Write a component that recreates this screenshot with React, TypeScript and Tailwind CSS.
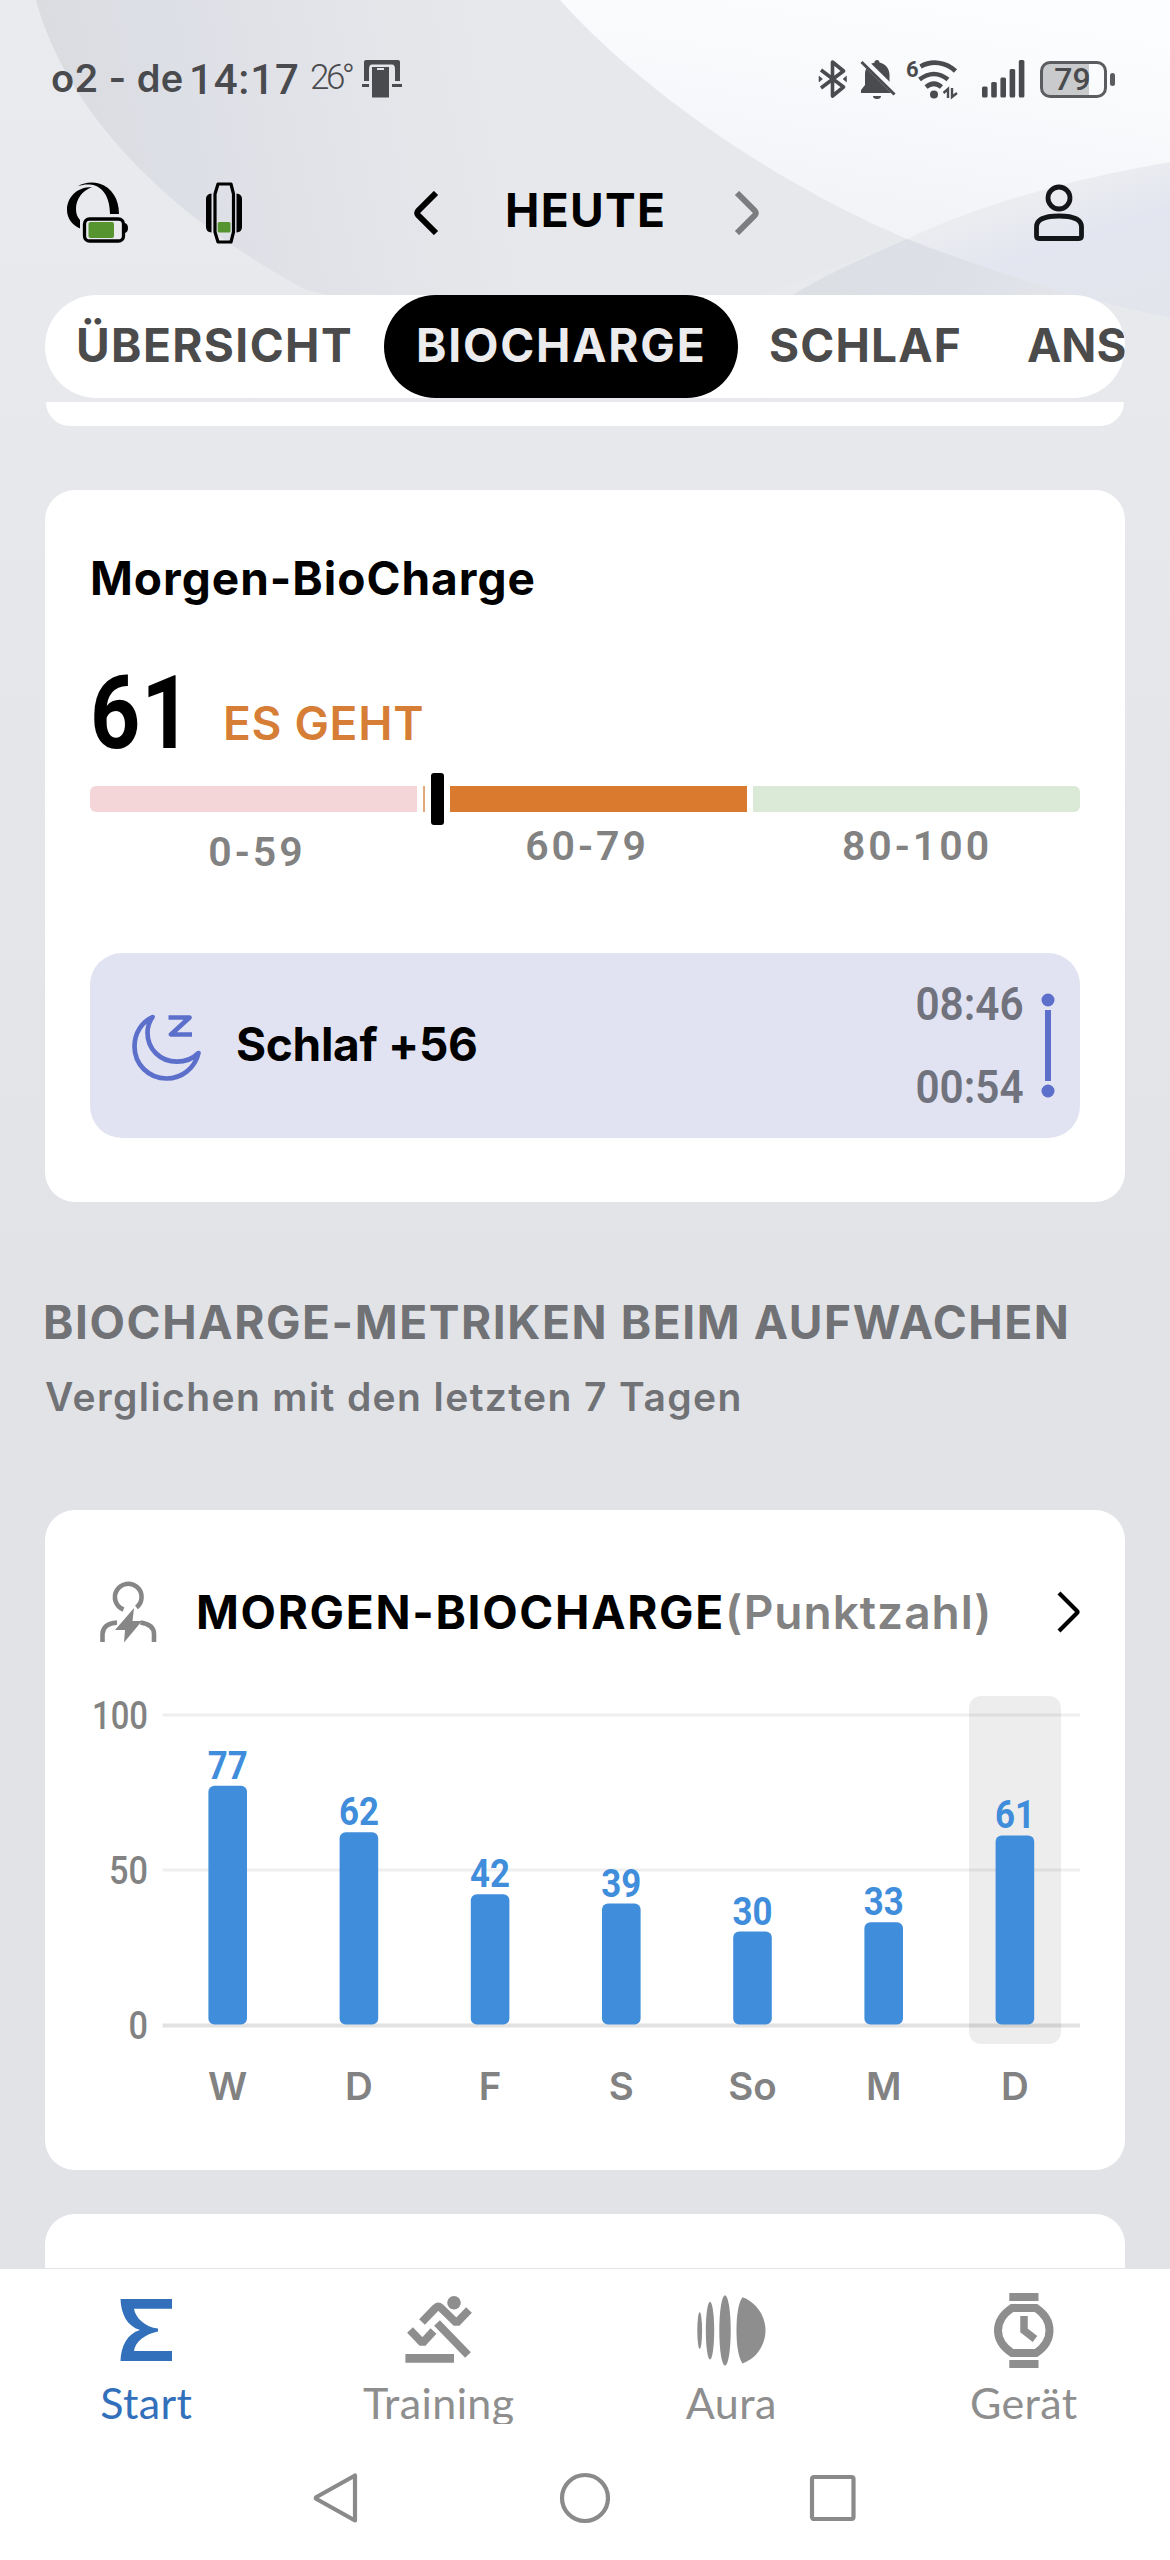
import type { ReactNode } from 'react'

const days = [
  { label: 'W', value: 77 },
  { label: 'D', value: 62 },
  { label: 'F', value: 42 },
  { label: 'S', value: 39 },
  { label: 'So', value: 30 },
  { label: 'M', value: 33 },
  { label: 'D', value: 61 },
]

const Backdrop = () => (
  <svg className="absolute inset-0" width="1170" height="2560" viewBox="0 0 1170 2560" fill="none">
    <defs>
      <linearGradient id="base" x1="0" y1="0" x2="0" y2="2560" gradientUnits="userSpaceOnUse">
        <stop stopColor="#e9ebee" />
        <stop offset=".2" stopColor="#e6e8eb" />
        <stop offset=".5" stopColor="#e2e3e7" />
        <stop offset="1" stopColor="#e2e3e7" />
      </linearGradient>
      <linearGradient id="leaf" x1="60" y1="120" x2="480" y2="40" gradientUnits="userSpaceOnUse">
        <stop stopColor="#dadce0" />
        <stop offset=".25" stopColor="#dddfe6" />
        <stop offset="1" stopColor="#e7e8eb" />
      </linearGradient>
      <linearGradient id="light" x1="900" y1="0" x2="850" y2="330" gradientUnits="userSpaceOnUse">
        <stop stopColor="#fcfdfe" />
        <stop offset=".45" stopColor="#f6f7fa" />
        <stop offset="1" stopColor="#eceef2" />
      </linearGradient>
      <linearGradient id="wing" x1="1060" y1="190" x2="1100" y2="310" gradientUnits="userSpaceOnUse">
        <stop stopColor="#ebecf0" />
        <stop offset=".4" stopColor="#e3e6f0" />
        <stop offset="1" stopColor="#e2e5ec" />
      </linearGradient>
      <linearGradient id="overlap" x1="850" y1="250" x2="1060" y2="330" gradientUnits="userSpaceOnUse">
        <stop stopColor="#dcdfe4" />
        <stop offset=".5" stopColor="#dde0e7" />
        <stop offset="1" stopColor="#e3e5ea" />
      </linearGradient>
    </defs>
    <rect width="1170" height="2560" fill="url(#base)" />
    <path d="M36 0C60 90 140 200 306 290L440 320H700L907 239C790 190 650 100 560 0Z" fill="url(#leaf)" />
    <path d="M560 0C650 100 790 190 907 239C990 271 1080 300 1170 318V0Z" fill="url(#light)" />
    <path d="M907 239C990 200 1080 178 1170 162V318C1080 300 990 271 907 239Z" fill="url(#wing)" />
    <path d="M907 239C860 259 815 280 785 300H1092C1030 283 970 263 907 239Z" fill="url(#overlap)" />
  </svg>
)

const StatusBar = () => (
  <div className="relative flex h-[158px] shrink-0 items-center pl-[51px] pr-[55px] text-[#4a4b4e]">
    <div className="w-[138px] pb-[1px] font-['Inter',sans-serif] text-[38px] font-semibold tracking-[0.4px] whitespace-nowrap">o2 - de</div>
    <div className="w-[121px] font-['Roboto',sans-serif] text-[42px] font-medium tracking-[0.8px]">14:17</div>
    <div className="w-[51px] pb-[2px] font-['Roboto',sans-serif] text-[35px] font-light tracking-[-3.5px]">26°</div>
    <svg width="42" height="40" viewBox="0 0 42 40" fill="currentColor">
      <path d="M5 1H37Q39 1 39 3V22H34V10Q34 5.500 31 5.500H11Q8 5.500 8 10V22H3V3Q3 1 5 1Z" />
      <path d="M11 8H28V38.500H11Z" />
      <path d="M1 25H8V28H1ZM31 25H41V28H31Z" />
      <path d="M16 10H23" stroke="#e3e5ea" strokeWidth="2" />
    </svg>
    <div className="ml-auto flex items-center">
      <svg width="30" height="38" viewBox="0 0 30 38" fill="none" stroke="currentColor" strokeWidth="3.600" strokeLinejoin="round">
        <path d="M3 10L25.500 27L14.500 36V2L25.500 11L3 28" />
        <path d="M1 16L4.500 19L1 22ZM28.500 16L25 19L28.500 22Z" strokeWidth="0.500" fill="currentColor" />
      </svg>
      <svg className="ml-[12px]" width="36" height="40" viewBox="0 0 36 40">
        <path
          d="M17 1C18.500 1 19.500 2 19.500 3.500C26 5 29.500 10 29.500 16V26L33 34H1V31L5 26V15C5 9 9 5 14.500 3.500C14.500 2 15.500 1 17 1Z"
          fill="currentColor"
        />
        <path d="M13 37H21A4 3 0 0 1 13 37Z" fill="currentColor" />
        <path d="M3 1.500L36 34" stroke="#f7f8fa" strokeWidth="7" />
        <path d="M1.500 3L34.500 35.500" stroke="currentColor" strokeWidth="3" />
      </svg>
      <svg className="ml-[8px] overflow-visible" width="56" height="42" viewBox="-2 0 56 42" fill="none" stroke="currentColor" strokeWidth="4.600">
        <text x="0" y="18.500" fill="currentColor" stroke="none" className="font-['Roboto',sans-serif] text-[22px] font-bold">6</text>
        <path d="M14.500 8.500C26 2 40 4 49.500 13" />
        <path d="M13.500 21.500Q28 10.500 42 21.500" />
        <path d="M20 29Q28 22.500 35.500 29" />
        <circle cx="28" cy="36.500" r="4" fill="currentColor" stroke="none" />
        <path d="M37.500 35L42 31V40M46 30V39L51 35" strokeWidth="2.400" />
      </svg>
      <svg className="ml-[22px]" width="43" height="38" viewBox="0 0 43 38" fill="currentColor">
        <rect x="0" y="26.500" width="5.600" height="11" rx="1.500" />
        <rect x="9.200" y="22" width="5.600" height="15.500" rx="1.500" />
        <rect x="18.400" y="17.500" width="5.600" height="20" rx="1.500" />
        <rect x="27.600" y="9" width="5.600" height="28.500" rx="1.500" />
        <rect x="36.800" y="0" width="5.600" height="37.500" rx="1.500" />
      </svg>
      <div className="ml-[15px] flex h-[37px] w-[67px] items-center justify-center rounded-[10px] border-3 border-[#5b5c5f] bg-linear-to-r from-[#c9cacc] from-76% to-transparent to-76% pr-[2px] font-['Roboto',sans-serif] text-[32px] font-medium">
        79
      </div>
      <div className="ml-[3px] h-[13px] w-[5px] rounded-full bg-[#5b5c5f]" />
    </div>
  </div>
)

const Header = () => (
  <div className="relative flex h-[110px] shrink-0 items-center pl-[66px] pr-[85px]">
    <svg width="64" height="64" viewBox="0 0 64 64">
      <path d="M12 5C18 1.500 26 0.500 33 2.500C46 6.500 53 18 53 33H44C44 18 38 6 26 3.800C21 3 17 3.500 12 5Z" />
      <path d="M26 6C10 6 1 17 1 29C1 37 6 44 14 47.500V39C11 36 10 32 10 28C10 18 16 10 26 6Z" />
      <rect x="18.500" y="38" width="39" height="22" rx="5" fill="none" stroke="#000" strokeWidth="3.300" />
      <rect x="22.500" y="41" width="25.500" height="16" rx="2" fill="#56942f" />
      <path d="M59 42Q62 43 62 47T59 52Z" />
    </svg>
    <svg className="ml-[75px]" width="38" height="64" viewBox="0 0 38 64">
      <path d="M13 3H26L28.500 13V51L26 61H13L10 51V13Z" fill="none" stroke="#000" strokeWidth="3.200" strokeLinejoin="round" />
      <path d="M6.500 12.500V51.500Q1 51 1 46V18Q1 13 6.500 12.500ZM31.500 12.500V51.500Q37 51 37 46V18Q37 13 31.500 12.500Z" />
      <rect x="12.700" y="41" width="12.800" height="10.500" rx="1.500" fill="#56942f" />
    </svg>
    <svg className="ml-[168px]" width="28" height="44" viewBox="0 0 28 44" fill="none" stroke="#000" strokeWidth="6">
      <path d="M25 2L7 20Q5.500 22 7 24L25 42" />
    </svg>
    <div className="ml-[66px] w-[229px] pb-[5px] font-['Inter',sans-serif] text-[46px] font-bold tracking-[1.3px]">HEUTE</div>
    <svg width="28" height="44" viewBox="0 0 28 44" fill="none" stroke="#7c7d7f" strokeWidth="6">
      <path d="M3 2L21 20Q22.500 22 21 24L3 42" />
    </svg>
    <svg className="ml-auto" width="52" height="60" viewBox="0 0 52 60" fill="none" stroke="#141518" strokeWidth="4.800">
      <ellipse cx="26" cy="15" rx="11" ry="11" />
      <path d="M3.500 53V44C3.500 36 13 33 26 33S48.500 36 48.500 44V53Q48.500 55.500 46 55.500H6Q3.500 55.500 3.500 53Z" />
    </svg>
  </div>
)

const Tabs = () => (
  <div className="relative mx-[45px] mt-[27px] flex h-[103px] shrink-0 overflow-hidden rounded-full bg-white font-['Inter',sans-serif] text-[46px] leading-[100px] font-bold whitespace-nowrap text-[#4b4b4b]">
    <div className="w-[339px] shrink-0 pl-[31px] tracking-[1.4px]">ÜBERSICHT</div>
    <div className="w-[354px] shrink-0 rounded-full bg-black pl-[32px] tracking-[1.8px] text-[#ececee]">BIOCHARGE</div>
    <div className="w-[243px] shrink-0 pl-[31px] tracking-[1.2px]">SCHLAF</div>
    <div className="shrink-0 pl-[46px]">ANS</div>
  </div>
)

const MorningCard = () => (
  <div className="relative mx-[45px] mt-[64px] h-[712px] shrink-0 rounded-[30px] bg-white px-[45px] pt-[58px]">
    <h2 className="font-['Inter',sans-serif] text-[46px] leading-[60px] font-bold tracking-[1px]">Morgen-BioCharge</h2>
    <div className="flex h-[178px] items-start">
      <div className="mt-[55px] w-[133px] origin-left scale-x-86 font-['Roboto',sans-serif] text-[102px] leading-[100px] font-bold tracking-[1px]">61</div>
      <div className="mt-[85px] font-['Inter',sans-serif] text-[46px] leading-[60px] font-semibold tracking-[0.7px] text-[#d67d36]">ES GEHT</div>
    </div>
    <div className="flex h-[26px] items-center">
      <div className="h-full w-[327px] rounded-l-[6px] bg-[#f4d6d8]" />
      <div className="ml-[6px] h-full w-[2px] bg-[#e2a878]" />
      <div className="ml-[6px] h-[52px] w-[13px] shrink-0 rounded-[3px] bg-black" />
      <div className="ml-[6px] h-full w-[297px] bg-[#da7a2e]" />
      <div className="ml-[6px] h-full flex-1 rounded-r-[6px] bg-[#dbead7]" />
    </div>
    <div className="flex h-[141px] pt-[9px] text-center font-['Roboto',sans-serif] text-[41px] leading-[50px] font-semibold tracking-[3px] text-[#828282]">
      <div className="flex-1 pt-[6px] pl-[4px]">0-59</div>
      <div className="flex-1 pl-[4px]">60-79</div>
      <div className="flex-1 pl-[4px]">80-100</div>
    </div>
    <div className="flex h-[185px] items-center rounded-[32px] bg-[#e2e3f2] pl-[40px]">
      <svg className="mt-[5px]" width="72" height="70" viewBox="0 0 72 70" fill="none" stroke="#5c70cb" strokeWidth="4.700" strokeLinejoin="round">
        <path d="M22.500 4C12 9 4.500 20 4.500 33.500C4.500 51.500 19 65.500 36.500 65.500C52 65.500 65 55 68.500 40C63 45.500 55 48.700 47 48.700C30 48.700 17.500 36 17.500 19.500C17.500 14 19.500 8.500 22.500 4Z" />
        <path d="M38.500 4.500H59.500L41 21.500H62" />
      </svg>
      <div className="ml-[34px] pb-[3px] font-['Inter',sans-serif] text-[46px] leading-[60px] font-bold tracking-[-0.3px]">Schlaf +56</div>
      <div className="ml-auto origin-right scale-x-92 text-right font-['Roboto',sans-serif] text-[46px] leading-[83px] font-semibold text-[#70737d]">
        <div>08:46</div>
        <div>00:54</div>
      </div>
      <svg className="mr-[25px] ml-[17px]" width="14" height="185" viewBox="0 0 14 185" fill="#5c70cb">
        <circle cx="7" cy="47" r="6.500" />
        <rect x="4" y="57" width="6" height="71" />
        <circle cx="7" cy="138" r="6.500" />
      </svg>
    </div>
  </div>
)

const SectionHeading = () => (
  <div className="relative h-[308px] shrink-0 pt-[90px] font-['Inter',sans-serif] whitespace-nowrap text-[#707276]">
    <h2 className="ml-[43px] text-[46px] leading-[60px] font-bold tracking-[1.6px]">BIOCHARGE-METRIKEN BEIM AUFWACHEN</h2>
    <p className="mt-[20px] ml-[45px] text-[39px] leading-[50px] font-semibold tracking-[1.4px]">Verglichen mit den letzten 7 Tagen</p>
  </div>
)

const BASELINE = 377.5

const WeekChart = () => (
  <svg width="1080" height="523" viewBox="0 0 1080 523" className="font-['Roboto',sans-serif] text-[39px]">
    <path d="M117.500 68H1035M117.500 223H1035" stroke="#efefef" strokeWidth="3" />
    <path d="M117.500 378.500H1035" stroke="#e2e2e2" strokeWidth="4" />
    <g fill="#828282" textAnchor="end" className="font-medium">
      <text x="103" y="82" textLength="56" lengthAdjust="spacingAndGlyphs">100</text>
      <text x="103" y="236.500" textLength="39" lengthAdjust="spacingAndGlyphs">50</text>
      <text x="103" y="392" textLength="19.500" lengthAdjust="spacingAndGlyphs">0</text>
    </g>
    <rect x="924" y="49" width="92" height="348" rx="12" fill="#000" fillOpacity=".07" />
    {days.map(({ label, value }, i) => {
      const x = 182.7 + i * 131.2
      const height = value * 3.1
      return (
        <g key={i} textAnchor="middle">
          <rect x={x - 19.3} y={BASELINE - height} width="38.600" height={height} rx="6" fill="#408ddb" />
          <text x={x} y={BASELINE - height - 7} fill="#408ddb" className="font-bold" textLength="40" lengthAdjust="spacingAndGlyphs">
            {value}
          </text>
          <text x={x} y="453" fill="#828282" className="font-['Inter',sans-serif] text-[38.5px] font-semibold">
            {label}
          </text>
        </g>
      )
    })}
  </svg>
)

const ScoreCard = () => (
  <div className="relative mx-[45px] h-[660px] shrink-0 rounded-[30px] bg-white pt-[67px]">
    <div className="flex h-[70px] items-center pr-[42px] pl-[53px]">
      <svg width="60" height="66" viewBox="0 0 60 66" fill="none" stroke="#868686" strokeWidth="4.600">
        <path d="M25.500 30.500A13.300 13.300 0 1 1 38.500 28.500" />
        <path d="M4.500 63V55Q5 44.500 19 43.500M42.500 43.500Q56 45.500 56 55V63" />
        <path d="M36 29L17 51H27L26 63.500L44 42H34.500Z" fill="#868686" stroke="none" />
      </svg>
      <h2 className="ml-[38px] pb-[1px] font-['Inter',sans-serif] text-[46px] leading-[60px] font-bold tracking-[1.7px] whitespace-nowrap">
        MORGEN-BIOCHARGE<span className="font-semibold tracking-[1px] text-[#828282]">(Punktzahl)</span>
      </h2>
      <svg className="ml-auto" width="28" height="44" viewBox="0 0 28 44" fill="none" stroke="#000" strokeWidth="4.200">
        <path d="M4 3L22 21Q23 22 22 23L4 41" />
      </svg>
    </div>
    <WeekChart />
  </div>
)

const NavItem = ({ label, active, children }: { label: string; active?: boolean; children: ReactNode }) => (
  <div className={active ? 'flex flex-1 flex-col items-center text-[#3270bb]' : 'flex flex-1 flex-col items-center text-[#8e8e8e]'}>
    <div className="flex h-[76px] shrink-0 items-center">{children}</div>
    <div className="mt-[14px] shrink-0 text-[43px] leading-[42px] tracking-[0.4px]">{label}</div>
  </div>
)

const BottomNav = () => (
  <div className="relative h-[292px] shrink-0 border-t border-[#e3e4e6] bg-white">
    <div className="flex h-[155px] overflow-hidden pt-[23px] font-['Lato',sans-serif]">
      <NavItem label="Start" active>
        <svg width="52" height="62" viewBox="0 0 52 62" fill="currentColor">
          <path d="M0.500 0H52V9.700H14C15.500 19 25 28 38 29.500V32.500C25 35 15 43 14 52H52V62H0.500C1 47 7 35 20 31C7 27 1 15 0.500 0Z" />
        </svg>
      </NavItem>
      <NavItem label="Training">
        <svg width="70" height="70" viewBox="0 0 70 70" fill="none" stroke="currentColor" strokeWidth="8">
          <circle cx="50" cy="7.700" r="6.800" fill="currentColor" stroke="none" />
          <path d="M18 27L31.500 13Q34 10.500 37 13L52.500 28L65 15" strokeLinejoin="bevel" />
          <path d="M33 28L64 60" />
          <path d="M6 35L18.500 48L29.500 36" strokeLinejoin="bevel" />
          <path d="M1.400 63.400H50" strokeWidth="8.700" />
        </svg>
      </NavItem>
      <NavItem label="Aura">
        <svg width="70" height="73" viewBox="0 0 70 73" fill="currentColor">
          <ellipse cx="3.700" cy="36.600" rx="2.400" ry="18.300" />
          <ellipse cx="14" cy="36.600" rx="4.200" ry="28.800" />
          <ellipse cx="29" cy="36.500" rx="5.700" ry="35.200" />
          <path d="M46.500 3.300C60 8 69.500 22 69.500 36.500S60 65 46.500 69.400C42 63 40.500 50 40.500 36.500S42 9 46.500 3.300Z" />
        </svg>
      </NavItem>
      <NavItem label="Gerät">
        <svg width="62" height="77" viewBox="0 0 62 77" fill="none" stroke="currentColor" strokeWidth="8">
          <path d="M16.300 5H45.500M16.300 72H45.500" />
          <path d="M19 16H43C52 22 56.500 30 56.500 38.500S52 55 43 61H19C10 55 5 47 5 38.500S10 22 19 16Z" />
          <path d="M31 24V38.500L42 47" strokeWidth="7.500" />
        </svg>
      </NavItem>
    </div>
    <div className="flex justify-center gap-[196px] pt-[48px]">
      <svg width="52" height="52" viewBox="0 0 52 52" fill="none" stroke="#8a8a8a" strokeWidth="4.200" strokeLinejoin="round">
        <path d="M44 3.500V48.500L5.500 27Q4 26 5.500 25Z" />
      </svg>
      <svg width="52" height="52" viewBox="0 0 52 52" fill="none" stroke="#8a8a8a" strokeWidth="4.200">
        <circle cx="26" cy="26" r="23" />
      </svg>
      <svg width="52" height="52" viewBox="0 0 52 52" fill="none" stroke="#8a8a8a" strokeWidth="4.200">
        <rect x="5" y="5" width="41.500" height="42" rx="2" />
      </svg>
    </div>
  </div>
)

export default function App() {
  return (
    <div className="relative flex h-[2560px] w-[1170px] flex-col overflow-hidden bg-[#e3e4e8] text-black">
      <Backdrop />
      <StatusBar />
      <Header />
      <Tabs />
      <div className="relative mx-[46px] mt-[4px] h-[24px] shrink-0 rounded-b-[28px] bg-white" />
      <MorningCard />
      <SectionHeading />
      <ScoreCard />
      <div className="relative mx-[45px] mt-[44px] min-h-0 flex-1 rounded-t-[30px] bg-white" />
      <BottomNav />
    </div>
  )
}
